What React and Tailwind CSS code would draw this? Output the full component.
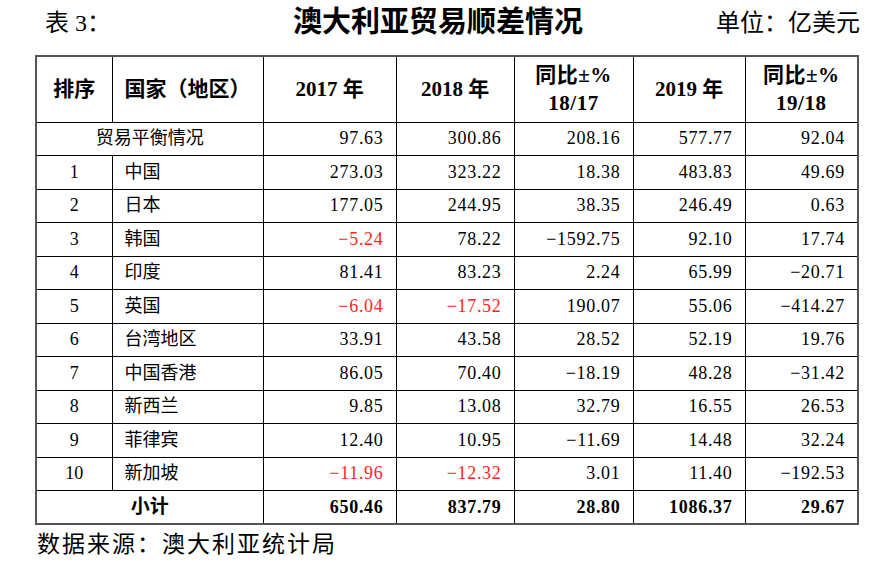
const rows = [
  ['1', '中国', '273.03', '323.22', '18.38', '483.83', '49.69'],
  ['2', '日本', '177.05', '244.95', '38.35', '246.49', '0.63'],
  ['3', '韩国', '-5.24', '78.22', '-1592.75', '92.10', '17.74'],
  ['4', '印度', '81.41', '83.23', '2.24', '65.99', '-20.71'],
  ['5', '英国', '-6.04', '-17.52', '190.07', '55.06', '-414.27'],
  ['6', '台湾地区', '33.91', '43.58', '28.52', '52.19', '19.76'],
  ['7', '中国香港', '86.05', '70.40', '-18.19', '48.28', '-31.42'],
  ['8', '新西兰', '9.85', '13.08', '32.79', '16.55', '26.53'],
  ['9', '菲律宾', '12.40', '10.95', '-11.69', '14.48', '32.24'],
  ['10', '新加坡', '-11.96', '-12.32', '3.01', '11.40', '-192.53'],
];

// only the yearly values (2017, 2018) are coloured red when negative
const redCols = [2, 3];

const font = { fontFamily: '"Liberation Serif", "Noto Sans CJK SC", serif' };

function Num({ v, red, bold }) {
  const neg = v.startsWith('-');
  return (
    <td className={`border border-black pr-[12px] text-right text-[18px] tracking-[0.7px] ${bold ? 'font-bold' : ''} ${red && neg ? 'text-[#ff2424]' : 'text-black'}`}>
      {neg ? '\u2212' + v.slice(1) : v}
    </td>
  );
}

export default function App() {
  return (
    <div className="w-[894px] h-[564px] bg-white text-black" style={font}>
      {/* title line */}
      <div className="flex items-center h-[45px]">
        <span className="w-[293px] pl-[45px] text-[24px]">表 3：</span>
        <span className="text-[29px] font-bold">澳大利亚贸易顺差情况</span>
        <span className="ml-auto mr-[34px] text-[24px]">单位：亿美元</span>
      </div>

      <table className="ml-[35px] mt-[10px] w-[822px] table-fixed border-collapse border-2 border-[#555]">
        <colgroup>
          <col className="w-[76px]" />
          <col className="w-[151px]" />
          <col className="w-[133px]" />
          <col className="w-[118px]" />
          <col className="w-[119px]" />
          <col className="w-[112px]" />
          <col className="w-[113px]" />
        </colgroup>
        <tbody>
          <tr className="h-[66px] text-[21px] font-bold text-center">
            <td className="border border-black">排序</td>
            <td className="border border-black">国家（地区）</td>
            <td className="border border-black">2017 年</td>
            <td className="border border-black">2018 年</td>
            <td className="border border-black leading-[28px] tracking-[0.5px]">同比±%<br />18/17</td>
            <td className="border border-black">2019 年</td>
            <td className="border border-black leading-[28px] tracking-[0.5px]">同比±%<br />19/18</td>
          </tr>
          <tr className="h-[33.5px]">
            <td colSpan={2} className="border border-black text-center text-[18px]">贸易平衡情况</td>
            <Num v="97.63" />
            <Num v="300.86" />
            <Num v="208.16" />
            <Num v="577.77" />
            <Num v="92.04" />
          </tr>
          {rows.map(r => (
            <tr key={r[0]} className="h-[33.5px]">
              <td className="border border-black text-center text-[18px]">{r[0]}</td>
              <td className="border border-black pl-[12px] text-[18px]">{r[1]}</td>
              {r.slice(2).map((v, i) => (
                <Num key={i} v={v} red={redCols.includes(i + 2)} />
              ))}
            </tr>
          ))}
          <tr className="h-[33.5px]">
            <td colSpan={2} className="border border-black text-center text-[19px] font-bold">小计</td>
            <Num v="650.46" bold />
            <Num v="837.79" bold />
            <Num v="28.80" bold />
            <Num v="1086.37" bold />
            <Num v="29.67" bold />
          </tr>
        </tbody>
      </table>

      <div className="pl-[37px] mt-[3px] text-[23px] tracking-[2px]">数据来源：澳大利亚统计局</div>
    </div>
  );
}
